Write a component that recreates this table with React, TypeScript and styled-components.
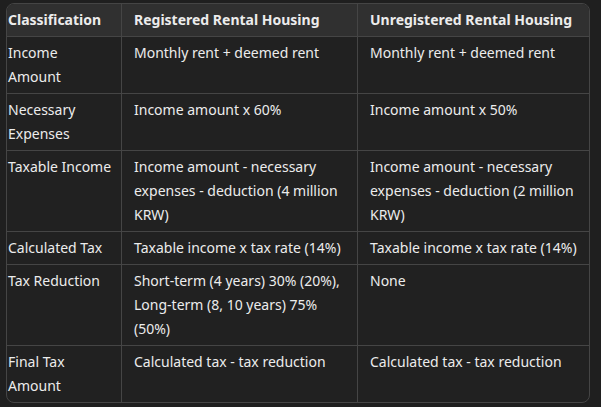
import React, { FC } from "react";
import styled, { createGlobalStyle } from "styled-components";

const GlobalStyle = createGlobalStyle`
  html, body {
    margin: 0;
    padding: 0;
    background: #1f1f1f;
  }
  body {
    font-family: "Noto Sans", "Noto Sans CJK KR", sans-serif;
    color: #ececec;
  }
`;

const Page = styled.div`
  padding: 3px 0 0 6px;
`;

const Table = styled.table`
  border-collapse: separate;
  border-spacing: 0;
  width: 584px;
  table-layout: fixed;
  border: 1px solid #454545;
  border-radius: 8px;
  background: #212121;
  font-size: 14px;
  line-height: 24px;
  overflow: hidden;
`;

const HeadCell = styled.th<{ first?: boolean; width?: number }>`
  box-sizing: border-box;
  ${({ width }) => (width ? `width: ${width}px;` : "")}
  text-align: left;
  font-weight: 700;
  background: #303030;
  padding: 4px 12px 4px ${({ first }) => (first ? "1px" : "12px")};
  border-bottom: 1px solid #454545;
  ${({ first }) => (first ? "" : "border-left: 1px solid #454545;")}
`;

const Cell = styled.td<{ first?: boolean; last?: boolean }>`
  box-sizing: border-box;
  vertical-align: top;
  padding: ${({ first }) => (first ? "4px 8px 4px 1px" : "4px 8px 4px 12px")};
  ${({ last }) => (last ? "" : "border-bottom: 1px solid #454545;")}
  ${({ first }) => (first ? "" : "border-left: 1px solid #454545;")}
`;

const columns = [
  { label: "Classification", width: 114 },
  { label: "Registered Rental Housing", width: 236 },
  { label: "Unregistered Rental Housing" },
];

const rows = [
  ["Income Amount", "Monthly rent + deemed rent", "Monthly rent + deemed rent"],
  ["Necessary Expenses", "Income amount x 60%", "Income amount x 50%"],
  [
    "Taxable Income",
    "Income amount - necessary expenses - deduction (4 million KRW)",
    "Income amount - necessary expenses - deduction (2 million KRW)",
  ],
  ["Calculated Tax", "Taxable income x tax rate (14%)", "Taxable income x tax rate (14%)"],
  [
    "Tax Reduction",
    "Short-term (4 years) 30% (20%), Long-term (8, 10 years) 75% (50%)",
    "None",
  ],
  ["Final Tax Amount", "Calculated tax - tax reduction", "Calculated tax - tax reduction"],
];

const App: FC = () => (
  <>
    <GlobalStyle />
    <Page>
      <Table>
        <thead>
          <tr>
            {columns.map(({ label, width }, index) => (
              <HeadCell key={index} first={index === 0} width={width}>
                {label}
              </HeadCell>
            ))}
          </tr>
        </thead>
        <tbody>
          {rows.map((row, rowIndex) => (
            <tr key={rowIndex}>
              {row.map((text, index) => (
                <Cell
                  key={index}
                  first={index === 0}
                  last={rowIndex === rows.length - 1}
                >
                  {text}
                </Cell>
              ))}
            </tr>
          ))}
        </tbody>
      </Table>
    </Page>
  </>
);

export default App;
